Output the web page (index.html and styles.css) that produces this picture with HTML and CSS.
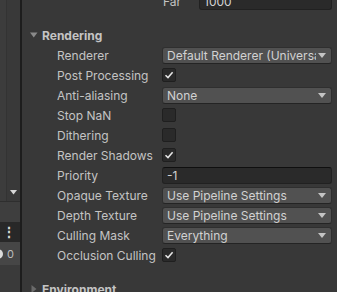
FILE: index.html
```html
<!DOCTYPE html>
<html>
<head>
<meta charset="utf-8">
<link rel="stylesheet" href="styles.css">
</head>
<body>
<div class="app">
  <aside class="side">
    <div class="side-top">
      <div class="side-strip"></div>
      <div class="side-body">
        <svg class="side-caret" width="7" height="5" viewBox="0 0 7 5"><path d="M0 0H7L3.5 4.5Z" fill="#d8d8d8"/></svg>
      </div>
    </div>
    <div class="side-row side-light"></div>
    <div class="side-row side-dark"><span class="kebab">⋮</span></div>
    <div class="side-row side-mid"><span class="toggle"></span><span class="count">0</span></div>
    <div class="side-rest"></div>
  </aside>
  <div class="split"></div>
  <main class="inspector">
    <div class="row sub">
      <span class="label">Far</span>
      <div class="field text-field">1000</div>
    </div>

    <div class="fold-head">
      <svg class="fold-tri" width="8" height="8" viewBox="0 0 8 8"><path d="M0 1.5H7.5L3.75 6.5Z" fill="#8a8a8a"/></svg>
      <span>Rendering</span>
    </div>

    <div class="row">
      <span class="label">Renderer</span>
      <div class="field popup"><span class="popup-text">Default Renderer (Universal Render Pipeline Asset)</span><svg class="popup-arrow" width="8" height="5" viewBox="0 0 8 5"><path d="M0 0H8L4 5Z" fill="#c4c4c4"/></svg></div>
    </div>
    <div class="row">
      <span class="label">Post Processing</span>
      <span class="check on"><svg width="10" height="10" viewBox="0 0 10 10"><path d="M1.5 5.2L4 7.6L8.6 2.2" fill="none" stroke="#e6e6e6" stroke-width="1.5"/></svg></span>
    </div>
    <div class="row">
      <span class="label">Anti-aliasing</span>
      <div class="field popup"><span class="popup-text">None</span><svg class="popup-arrow" width="8" height="5" viewBox="0 0 8 5"><path d="M0 0H8L4 5Z" fill="#c4c4c4"/></svg></div>
    </div>
    <div class="row">
      <span class="label">Stop NaN</span>
      <span class="check"></span>
    </div>
    <div class="row">
      <span class="label">Dithering</span>
      <span class="check"></span>
    </div>
    <div class="row">
      <span class="label">Render Shadows</span>
      <span class="check on"><svg width="10" height="10" viewBox="0 0 10 10"><path d="M1.5 5.2L4 7.6L8.6 2.2" fill="none" stroke="#e6e6e6" stroke-width="1.5"/></svg></span>
    </div>
    <div class="row">
      <span class="label">Priority</span>
      <div class="field text-field">-1</div>
    </div>
    <div class="row">
      <span class="label">Opaque Texture</span>
      <div class="field popup"><span class="popup-text">Use Pipeline Settings</span><svg class="popup-arrow" width="8" height="5" viewBox="0 0 8 5"><path d="M0 0H8L4 5Z" fill="#c4c4c4"/></svg></div>
    </div>
    <div class="row">
      <span class="label">Depth Texture</span>
      <div class="field popup"><span class="popup-text">Use Pipeline Settings</span><svg class="popup-arrow" width="8" height="5" viewBox="0 0 8 5"><path d="M0 0H8L4 5Z" fill="#c4c4c4"/></svg></div>
    </div>
    <div class="row">
      <span class="label">Culling Mask</span>
      <div class="field popup"><span class="popup-text">Everything</span><svg class="popup-arrow" width="8" height="5" viewBox="0 0 8 5"><path d="M0 0H8L4 5Z" fill="#c4c4c4"/></svg></div>
    </div>
    <div class="row">
      <span class="label">Occlusion Culling</span>
      <span class="check on"><svg width="10" height="10" viewBox="0 0 10 10"><path d="M1.5 5.2L4 7.6L8.6 2.2" fill="none" stroke="#e6e6e6" stroke-width="1.5"/></svg></span>
    </div>

    <div class="fold-head env">
      <svg class="fold-tri" width="8" height="8" viewBox="0 0 8 8"><path d="M1.5 0V8L6.5 4Z" fill="#6a6a6a"/></svg>
      <span>Environment</span>
    </div>
  </main>
</div>
</body>
</html>
```
FILE: styles.css
```css
* { box-sizing: border-box; }
html, body {
  margin: 0;
  padding: 0;
  width: 337px;
  height: 292px;
  overflow: hidden;
  background: #383838;
}
body {
  font-family: Inter, "Noto Sans", sans-serif;
  font-size: 12px;
  color: #c4c4c4;
}
.app {
  display: flex;
  width: 337px;
  height: 292px;
}
.side {
  width: 20px;
  flex: none;
  display: flex;
  flex-direction: column;
  background: #3a3a3a;
}
.side-top {
  height: 202px;
  display: flex;
  border-bottom: 1px solid #2e2e2e;
}
.side-strip {
  width: 7px;
  background: #3c3c3c;
  border-right: 1px solid #333333;
}
.side-body {
  flex: 1;
  display: flex;
  align-items: flex-end;
  justify-content: center;
  padding-bottom: 6px;
  background: #393939;
}
.side-caret { display: block; }
.side-row {
  height: 20px;
  display: flex;
  align-items: center;
}
.side-light { background: #3e3e3e; }
.side-dark {
  background: #282828;
  padding-left: 2px;
}
.kebab {
  color: #d6d6d6;
  font-size: 14px;
  font-weight: 700;
  line-height: 1;
}
.side-mid {
  height: 23px;
  background: #464646;
  gap: 4px;
}
.toggle {
  width: 7px;
  height: 10px;
  margin-left: -4px;
  border-radius: 0 5px 5px 0;
  background: #dcdcdc;
}
.count {
  color: #bdbdbd;
  font-size: 11px;
}
.side-rest { flex: 1; background: #3a3a3a; }
.split {
  width: 2px;
  flex: none;
  background: #1d1d1d;
}
.inspector {
  flex: 1;
  min-width: 0;
  display: flex;
  flex-direction: column;
  margin-top: -9px;
  padding-right: 5px;
}
.row {
  height: 20px;
  display: flex;
  align-items: center;
  padding-left: 35px;
  flex: none;
  min-width: 0;
}
.label {
  width: 105px;
  flex: none;
  white-space: nowrap;
  overflow: hidden;
}
.row.sub .label {
  width: 142px;
  padding-left: 106px;
}
.field {
  flex: 1 1 0;
  min-width: 0;
  height: 17px;
  border-radius: 3px;
  display: flex;
  align-items: center;
  white-space: nowrap;
  overflow: hidden;
}
.text-field {
  background: #2a2a2a;
  border: 1px solid #212121;
  border-top-color: #0f0f0f;
  padding-left: 4px;
  color: #d2d2d2;
}
.popup {
  background: #515151;
  border: 1px solid #2f2f2f;
  border-bottom-color: #242424;
  padding-left: 4px;
  padding-right: 5px;
  color: #d2d2d2;
}
.popup-text {
  flex: 1 1 0;
  min-width: 0;
  overflow: hidden;
}
.popup-arrow {
  flex: none;
  margin-left: 2px;
}
.check {
  width: 14px;
  height: 14px;
  flex: none;
  background: #2a2a2a;
  border: 1px solid #1f1f1f;
  border-radius: 2px;
  display: flex;
  align-items: center;
  justify-content: center;
}
.check svg { display: block; }
.fold-head {
  height: 20px;
  display: flex;
  align-items: center;
  margin-top: 14px;
  padding-left: 8px;
  font-weight: 700;
  color: #c4c4c4;
  flex: none;
}
.fold-tri {
  display: block;
  margin-right: 4px;
}
.fold-head.env {
  margin-top: 14px;
}
```
